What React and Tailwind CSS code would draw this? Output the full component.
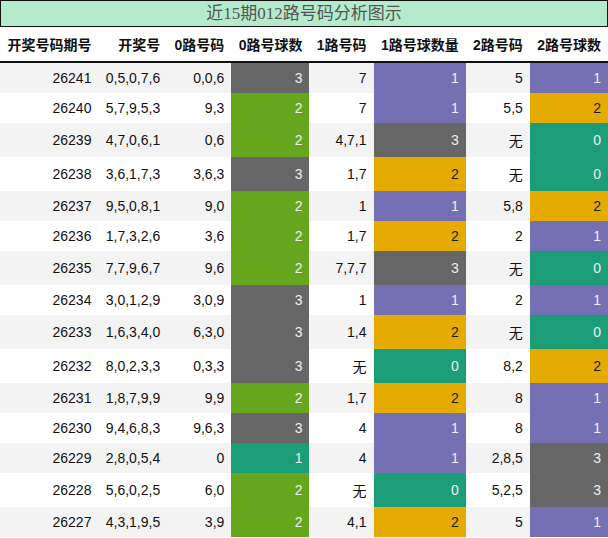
const rows = [
  ["26241", "0,5,0,7,6", "0,0,6", 3, "7", 1, "5", 1],
  ["26240", "5,7,9,5,3", "9,3", 2, "7", 1, "5,5", 2],
  ["26239", "4,7,0,6,1", "0,6", 2, "4,7,1", 3, "无", 0],
  ["26238", "3,6,1,7,3", "3,6,3", 3, "1,7", 2, "无", 0],
  ["26237", "9,5,0,8,1", "9,0", 2, "1", 1, "5,8", 2],
  ["26236", "1,7,3,2,6", "3,6", 2, "1,7", 2, "2", 1],
  ["26235", "7,7,9,6,7", "9,6", 2, "7,7,7", 3, "无", 0],
  ["26234", "3,0,1,2,9", "3,0,9", 3, "1", 1, "2", 1],
  ["26233", "1,6,3,4,0", "6,3,0", 3, "1,4", 2, "无", 0],
  ["26232", "8,0,2,3,3", "0,3,3", 3, "无", 0, "8,2", 2],
  ["26231", "1,8,7,9,9", "9,9", 2, "1,7", 2, "8", 1],
  ["26230", "9,4,6,8,3", "9,6,3", 3, "4", 1, "8", 1],
  ["26229", "2,8,0,5,4", "0", 1, "4", 1, "2,8,5", 3],
  ["26228", "5,6,0,2,5", "6,0", 2, "无", 0, "5,2,5", 3],
  ["26227", "4,3,1,9,5", "3,9", 2, "4,1", 2, "5", 1],
];

// 0路 column uses its own scale
const zeroColors = {
  1: "bg-[#1b9e77] text-[#eeeeee]",
  2: "bg-[#66a61e] text-[#eeeeee]",
  3: "bg-[#666666] text-[#eeeeee]",
};

const otherColors = {
  0: "bg-[#1b9e77] text-[#eeeeee]",
  1: "bg-[#7570b3] text-[#eeeeee]",
  2: "bg-[#e6ab02] text-[#1a1a1a]",
  3: "bg-[#666666] text-[#eeeeee]",
};

const headers = ["开奖号码期号", "开奖号", "0路号码", "0路号球数", "1路号码", "1路号球数量", "2路号码", "2路号球数"];

function Cell({ children, className = "" }) {
  return <td className={"px-[7px] py-[7px] text-right whitespace-nowrap " + className}>{children}</td>;
}

export default function App() {
  return (
    <div className="w-[608px] bg-white">
      <div className="h-[27px] border border-[#111] bg-[#b3ebcc] flex items-center justify-center text-[17px] leading-none text-[#555] font-['Liberation_Serif','Noto_Sans_CJK_SC',serif]">
        近15期012路号码分析图示
      </div>
      <table className="w-full border-collapse text-[14px] leading-[normal] text-[#111] font-['Liberation_Sans','Noto_Sans_CJK_SC',sans-serif]">
        <thead>
          <tr className="border-b-2 border-[#111]">
            {headers.map((h) => (
              <th key={h} className="px-[7px] py-[7px] text-right font-bold whitespace-nowrap">
                {h}
              </th>
            ))}
          </tr>
        </thead>
        <tbody>
          {rows.map((r, i) => (
            <tr key={r[0]} className={i % 2 === 0 ? "bg-[#f3f3f3]" : "bg-white"}>
              <Cell>{r[0]}</Cell>
              <Cell>{r[1]}</Cell>
              <Cell>{r[2]}</Cell>
              <Cell className={zeroColors[r[3]]}>{r[3]}</Cell>
              <Cell>{r[4]}</Cell>
              <Cell className={otherColors[r[5]]}>{r[5]}</Cell>
              <Cell>{r[6]}</Cell>
              <Cell className={otherColors[r[7]]}>{r[7]}</Cell>
            </tr>
          ))}
        </tbody>
      </table>
    </div>
  );
}
